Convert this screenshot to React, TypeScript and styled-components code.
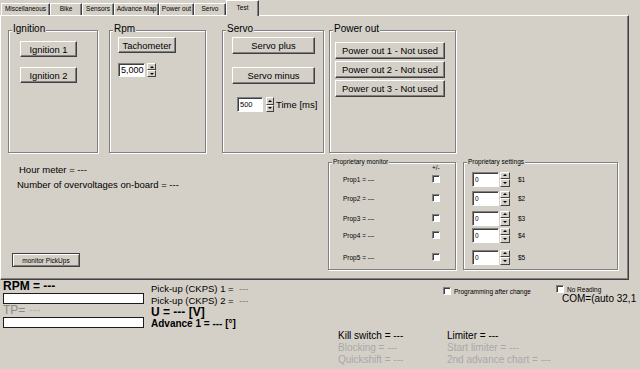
import React from 'react';
import styled, { createGlobalStyle } from 'styled-components';

const face = '#d4d0c8';
const shadow = '#808080';
const dark = '#404040';
const dim = '#a8a8a8';

const GlobalStyle = createGlobalStyle`
  html, body {
    margin: 0;
    padding: 0;
    background: ${face};
  }
  body {
    font-family: "Liberation Sans", Arial, sans-serif;
  }
`;

const Screen = styled.div`
  width: 640px;
  height: 369px;
  overflow: hidden;
  background: ${face};
  color: #000;
  font-family: "Liberation Sans", Arial, sans-serif;
  font-size: 9.5px;
  display: flex;
  flex-direction: column;
`;

/* ---- tabs ---- */

const TabStrip = styled.div`
  display: flex;
  align-items: flex-end;
  height: 15px;
  padding-left: 1px;
  flex: none;
`;

const Tab = styled.div<{ $w: number; $active?: boolean }>`
  position: relative;
  z-index: ${p => (p.$active ? 2 : 0)};
  box-sizing: border-box;
  width: ${p => p.$w}px;
  height: ${p => (p.$active ? 16 : 12)}px;
  margin-bottom: ${p => (p.$active ? -1 : 0)}px;
  background: ${face};
  border: 1px solid;
  border-bottom: none;
  border-color: #fff ${dark} transparent #fff;
  box-shadow: inset -1px 0 0 ${shadow};
  font-size: 6.5px;
  line-height: 10px;
  padding-top: ${p => (p.$active ? 2 : 0)}px;
  text-align: center;
  white-space: nowrap;
`;

/* ---- panel ---- */

const Panel = styled.div`
  box-sizing: border-box;
  width: 629px;
  height: 265px;
  flex: none;
  border: 1px solid;
  border-color: #fff ${dark} ${dark} #fff;
  box-shadow: inset -1px -1px 0 ${shadow};
  display: flex;
  flex-direction: column;
`;

const GroupRow = styled.div<{ $top: number; $left: number }>`
  display: flex;
  align-items: flex-start;
  padding: ${p => p.$top}px 0 0 ${p => p.$left}px;
`;

const Group = styled.div<{ $w: number; $h: number; $ml?: number }>`
  position: relative;
  box-sizing: border-box;
  width: ${p => p.$w}px;
  height: ${p => p.$h}px;
  margin-left: ${p => p.$ml ?? 0}px;
  flex: none;
  border: 1px solid ${shadow};
  box-shadow: 1px 1px 0 #fff, inset 1px 1px 0 #fff;
`;

const Legend = styled.span<{ $small?: boolean }>`
  position: absolute;
  top: ${p => (p.$small ? -6 : -8)}px;
  left: 3px;
  padding: 0 1px;
  background: ${face};
  font-size: ${p => (p.$small ? 6.5 : 10)}px;
  line-height: ${p => (p.$small ? 10 : 12)}px;
  white-space: nowrap;
`;

const Stack = styled.div<{ $pt: number; $pl: number; $gap: number }>`
  display: flex;
  flex-direction: column;
  align-items: flex-start;
  gap: ${p => p.$gap}px;
  padding: ${p => p.$pt}px 0 0 ${p => p.$pl}px;
`;

const Button = styled.button<{ $w: number; $h?: number }>`
  box-sizing: border-box;
  width: ${p => p.$w}px;
  height: ${p => p.$h ?? 16}px;
  margin: 0;
  padding: 0;
  display: flex;
  align-items: center;
  justify-content: center;
  background: ${face};
  color: #000;
  font-family: inherit;
  font-size: 9.4px;
  border: 1px solid;
  border-color: #fff ${dark} ${dark} #fff;
  box-shadow: inset -1px -1px 0 ${shadow};
  white-space: nowrap;
`;

const FramedButton = styled(Button)`
  font-size: 6.5px;
  border-color: ${dark};
  box-shadow: inset 1px 1px 0 #fff, inset -1px -1px 0 ${shadow};
`;

/* ---- spin boxes ---- */

const Spin = styled.div<{ $gap: number; $ml?: number }>`
  display: flex;
  align-items: center;
  gap: ${p => p.$gap}px;
  margin-left: ${p => p.$ml ?? 0}px;
`;

const Field = styled.div<{ $w: number; $h: number; $fs: number }>`
  box-sizing: border-box;
  width: ${p => p.$w}px;
  height: ${p => p.$h}px;
  background: #fff;
  border: 1px solid;
  border-color: ${shadow} #fff #fff ${shadow};
  box-shadow: inset 1px 1px 0 ${dark};
  padding-left: 2px;
  font-size: ${p => p.$fs}px;
  line-height: ${p => p.$h - 2}px;
`;

const Arrows = styled.div<{ $w: number; $h: number }>`
  display: flex;
  flex-direction: column;
  width: ${p => p.$w}px;
  height: ${p => p.$h}px;
`;

const ArrowButton = styled.div<{ $down?: boolean }>`
  flex: 1;
  box-sizing: border-box;
  display: flex;
  align-items: center;
  justify-content: center;
  background: ${face};
  border: 1px solid;
  border-color: #fff ${dark} ${dark} #fff;

  &::after {
    content: '';
    border-left: 2px solid transparent;
    border-right: 2px solid transparent;
    ${p => (p.$down ? 'border-top' : 'border-bottom')}: 2px solid #000;
  }
`;

const SpinLabel = styled.span<{ $small?: boolean }>`
  font-size: ${p => (p.$small ? 6.5 : 9.5)}px;
  white-space: nowrap;
`;

type SpinBoxProps = {
  value: string;
  w: number;
  h: number;
  fs: number;
  arrowW: number;
  gap: number;
  ml?: number;
  label?: string;
  labelGap?: number;
  smallLabel?: boolean;
};

const SpinBox = ({ value, w, h, fs, arrowW, gap, ml, label, labelGap, smallLabel }: SpinBoxProps) => (
  <Spin $gap={gap} $ml={ml}>
    <Field $w={w} $h={h} $fs={fs}>{value}</Field>
    <Arrows $w={arrowW} $h={h}>
      <ArrowButton />
      <ArrowButton $down />
    </Arrows>
    {label && <SpinLabel $small={smallLabel} style={{ marginLeft: (labelGap ?? gap) - gap }}>{label}</SpinLabel>}
  </Spin>
);

/* ---- lower part of the panel ---- */

const LowerRow = styled.div`
  display: flex;
  align-items: stretch;
  margin-top: 9px;
  height: 108px;
`;

const InfoColumn = styled.div`
  width: 327px;
  display: flex;
  flex-direction: column;
`;

const InfoLine = styled.div<{ $indent: number }>`
  padding-left: ${p => p.$indent}px;
  line-height: 15px;
  white-space: nowrap;
`;

const PickUpsSlot = styled.div`
  margin-top: auto;
  margin-bottom: 3px;
  padding-left: 11px;
`;

const PropBody = styled.div<{ $pl: number }>`
  display: flex;
  flex-direction: column;
  padding-left: ${p => p.$pl}px;
  font-size: 6.5px;
`;

const PropHeader = styled.div`
  height: 9px;
  padding-left: 103px;
  line-height: 9px;
`;

const PropRow = styled.div<{ $mt: number }>`
  display: flex;
  align-items: center;
  height: 14px;
  margin-top: ${p => p.$mt}px;
  white-space: nowrap;
`;

const PropName = styled.span`
  width: 89px;
  padding-left: 14px;
`;

const Check = styled.span`
  display: inline-block;
  box-sizing: border-box;
  width: 8px;
  height: 8px;
  flex: none;
  background: #fff;
  border: 1px solid;
  border-color: ${shadow} #fff #fff ${shadow};
  box-shadow: inset 1px 1px 0 ${dark};
`;

/* ---- status area ---- */

const Status = styled.div`
  display: flex;
  height: 89px;
  flex: none;
`;

const MeterColumn = styled.div`
  width: 141px;
  margin-left: 3px;
  display: flex;
  flex-direction: column;
`;

const BigLabel = styled.div<{ $dim?: boolean }>`
  font-size: 12px;
  line-height: 13px;
  font-weight: ${p => (p.$dim ? 400 : 700)};
  color: ${p => (p.$dim ? '#8a8a8a' : '#000')};
  white-space: nowrap;
`;

const Faint = styled.span`
  color: #b4b4b4;
  font-weight: 400;
`;

const Meter = styled.div`
  box-sizing: border-box;
  height: 11px;
  background: #fff;
  border: 1px solid #1c1c1c;
`;

const ReadingColumn = styled.div`
  width: 187px;
  margin-left: 7px;
  padding-top: 3px;
  display: flex;
  flex-direction: column;
`;

const Reading = styled.div<{ $size: number; $lh: number; $bold?: boolean }>`
  font-size: ${p => p.$size}px;
  line-height: ${p => p.$lh}px;
  font-weight: ${p => (p.$bold ? 700 : 400)};
  white-space: nowrap;
`;

const Dashes = styled.span`
  color: #7a7a7a;
`;

const ControlColumn = styled.div`
  flex: 1;
  min-width: 0;
  display: flex;
  flex-direction: column;
`;

const OptionsRow = styled.div`
  display: flex;
  height: 50px;
`;

const Option = styled.label<{ $mt: number; $ml: number; $w?: number }>`
  display: flex;
  align-items: center;
  gap: 3px;
  height: 8px;
  margin-top: ${p => p.$mt}px;
  margin-left: ${p => p.$ml}px;
  width: ${p => (p.$w ? `${p.$w}px` : 'auto')};
  font-size: 6.5px;
  white-space: nowrap;
`;

const ComBlock = styled.div`
  display: flex;
  flex-direction: column;
`;

const ComText = styled.div`
  margin-left: 6px;
  font-size: 10px;
  line-height: 12px;
  white-space: nowrap;
`;

const FlagGrid = styled.div`
  display: grid;
  grid-template-columns: 109px auto;
  grid-auto-rows: 12px;
  font-size: 10px;
  line-height: 12px;
  white-space: nowrap;
`;

const Flag = styled.span<{ $off?: boolean }>`
  color: ${p => (p.$off ? dim : '#000')};
`;

const tabs = [
  { label: 'Miscellaneous', w: 49 },
  { label: 'Bike', w: 32 },
  { label: 'Sensors', w: 32 },
  { label: 'Advance Map', w: 45 },
  { label: 'Power out', w: 35 },
  { label: 'Servo', w: 32 },
  { label: 'Test', w: 33, active: true },
];

const propRows = [
  { n: 1, mt: 0 },
  { n: 2, mt: 5 },
  { n: 3, mt: 6 },
  { n: 4, mt: 3 },
  { n: 5, mt: 8 },
];

const App = () => {
  return (
    <Screen>
      <GlobalStyle />
      <TabStrip>
        {tabs.map(t => (
          <Tab key={t.label} $w={t.w} $active={t.active}>{t.label}</Tab>
        ))}
      </TabStrip>

      <Panel>
        <GroupRow $top={14} $left={7}>
          <Group $w={90} $h={123}>
            <Legend>Ignition</Legend>
            <Stack $pt={10} $pl={11} $gap={10}>
              <Button $w={57}>Ignition 1</Button>
              <Button $w={57}>Ignition 2</Button>
            </Stack>
          </Group>

          <Group $w={97} $h={123} $ml={11}>
            <Legend>Rpm</Legend>
            <Stack $pt={6} $pl={8} $gap={10}>
              <Button $w={58}>Tachometer</Button>
              <SpinBox value="5,000" w={27} h={14} fs={9} arrowW={9} gap={2} />
            </Stack>
          </Group>

          <Group $w={102} $h={123} $ml={16}>
            <Legend>Servo</Legend>
            <Stack $pt={6} $pl={9} $gap={13}>
              <Button $w={83} $h={17}>Servo plus</Button>
              <Button $w={83} $h={17}>Servo minus</Button>
              <SpinBox value="500" w={26} h={15} fs={7.5} arrowW={8} gap={3} ml={5} label="Time [ms]" labelGap={2} />
            </Stack>
          </Group>

          <Group $w={127} $h={123} $ml={5}>
            <Legend>Power out</Legend>
            <Stack $pt={11} $pl={5} $gap={2}>
              <Button $w={110} $h={17}>Power out 1 - Not used</Button>
              <Button $w={110} $h={17}>Power out 2 - Not used</Button>
              <Button $w={110} $h={17}>Power out 3 - Not used</Button>
            </Stack>
          </Group>
        </GroupRow>

        <LowerRow>
          <InfoColumn>
            <InfoLine $indent={18}>Hour meter = ---</InfoLine>
            <InfoLine $indent={16}>Number of overvoltages on-board = ---</InfoLine>
            <PickUpsSlot>
              <FramedButton $w={68} $h={14}>monitor PickUps</FramedButton>
            </PickUpsSlot>
          </InfoColumn>

          <Group $w={128} $h={108}>
            <Legend $small>Proprietary monitor</Legend>
            <PropBody $pl={0}>
              <PropHeader>+/-</PropHeader>
              {propRows.map(r => (
                <PropRow key={r.n} $mt={r.mt}>
                  <PropName>Prop{r.n} = ---</PropName>
                  <Check />
                </PropRow>
              ))}
            </PropBody>
          </Group>

          <Group $w={155} $h={108} $ml={7}>
            <Legend $small>Proprietary settings</Legend>
            <PropBody $pl={8}>
              <PropHeader />
              {propRows.map(r => (
                <PropRow key={r.n} $mt={r.mt}>
                  <SpinBox value="0" w={27} h={15} fs={6.5} arrowW={10} gap={1} label={`$${r.n}`} labelGap={8} smallLabel />
                </PropRow>
              ))}
            </PropBody>
          </Group>
        </LowerRow>
      </Panel>

      <Status>
        <MeterColumn>
          <BigLabel>RPM = ---</BigLabel>
          <Meter />
          <BigLabel $dim>TP= <Faint>---</Faint></BigLabel>
          <Meter />
        </MeterColumn>

        <ReadingColumn>
          <Reading $size={9.5} $lh={12}>Pick-up (CKPS) 1 =&nbsp; <Dashes>---</Dashes></Reading>
          <Reading $size={9.5} $lh={12}>Pick-up (CKPS) 2 =&nbsp; <Dashes>---</Dashes></Reading>
          <Reading $size={12} $lh={11} $bold>U = --- [V]</Reading>
          <Reading $size={10} $lh={12} $bold>Advance 1 = --- [°]</Reading>
        </ReadingColumn>

        <ControlColumn>
          <OptionsRow>
            <Option $mt={7} $ml={105} $w={113}>
              <Check />
              Programming after change
            </Option>
            <ComBlock>
              <Option $mt={5} $ml={0}>
                <Check />
                No Reading
              </Option>
              <ComText>COM=(auto 32,1</ComText>
            </ComBlock>
          </OptionsRow>

          <FlagGrid>
            <Flag>Kill switch = ---</Flag>
            <Flag>Limiter = ---</Flag>
            <Flag $off>Blocking = ---</Flag>
            <Flag $off>Start limiter = ---</Flag>
            <Flag $off>Quickshift = ---</Flag>
            <Flag $off>2nd advance chart = ---</Flag>
          </FlagGrid>
        </ControlColumn>
      </Status>
    </Screen>
  );
};

export default App;
